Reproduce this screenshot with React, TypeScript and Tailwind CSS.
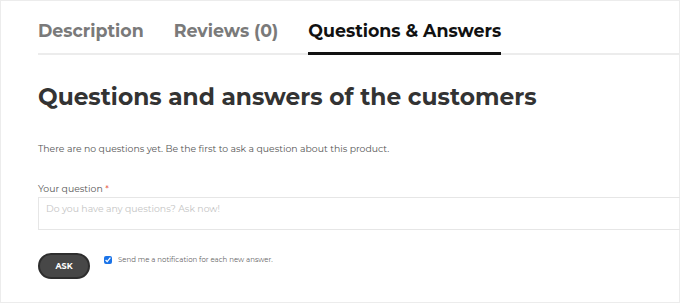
import { useState } from "react";

const font = { fontFamily: '"Montserrat", "Open Sans", "Liberation Sans", sans-serif' };

const tabs = [
  { key: "description", label: "Description" },
  { key: "reviews", label: "Reviews (0)" },
  { key: "qa", label: "Questions & Answers" },
];

export default function App() {
  const [active, setActive] = useState("qa");
  const [notify, setNotify] = useState(true);

  return (
    <div className="h-[304px] w-[680px] overflow-hidden bg-white" style={font}>
      <div className="h-[303px] w-[680px] border border-[#ececec] pl-[37px] pt-[18px]">
        <div className="flex gap-[30px] border-b-2 border-[#ececec]">
          {tabs.map((tab) => (
            <button
              key={tab.key}
              onClick={() => setActive(tab.key)}
              className={
                tab.key === active
                  ? "-mb-[2px] border-b-[3px] border-[#111] pb-[9px] text-[17.4px] font-bold leading-[24px] text-[#111]"
                  : "-mb-[2px] border-b-[3px] border-transparent pb-[9px] text-[17.4px] font-bold leading-[24px] text-[#7a7a7a]"
              }
            >
              {tab.label}
            </button>
          ))}
        </div>

        <h2 className="mt-[27px] text-[23.3px] font-bold leading-[30px] text-[#333]">
          Questions and answers of the customers
        </h2>

        <p className="mt-[30px] text-[9.3px] leading-[13px] text-[#555]">
          There are no questions yet. Be the first to ask a question about this product.
        </p>

        <label className="mt-[27px] block text-[9.3px] leading-[13px] text-[#555]">
          Your question <span className="text-[#e2401c]">*</span>
        </label>
        <textarea
          className="mt-[2px] block h-[33px] w-[660px] resize-none border border-[#e6e6e6] px-[7px] py-[4px] text-[9.3px] leading-[13px] text-[#555] outline-none placeholder:text-[#c4c4c4]"
          placeholder="Do you have any questions? Ask now!"
        />

        <div className="mt-[23px] flex items-start gap-[14px]">
          <button className="h-[26px] w-[52px] rounded-full border-2 border-[#2e2e2e] bg-[#474747] text-[8px] font-bold text-white">
            ASK
          </button>
          <label className="mt-[1px] flex items-center gap-[6px] text-[7px] leading-[12px] text-[#666]">
            <input
              type="checkbox"
              checked={notify}
              onChange={(e) => setNotify(e.target.checked)}
              className="h-[8px] w-[8px] accent-[#1a73e8]"
            />
            Send me a notification for each new answer.
          </label>
        </div>
      </div>
    </div>
  );
}
